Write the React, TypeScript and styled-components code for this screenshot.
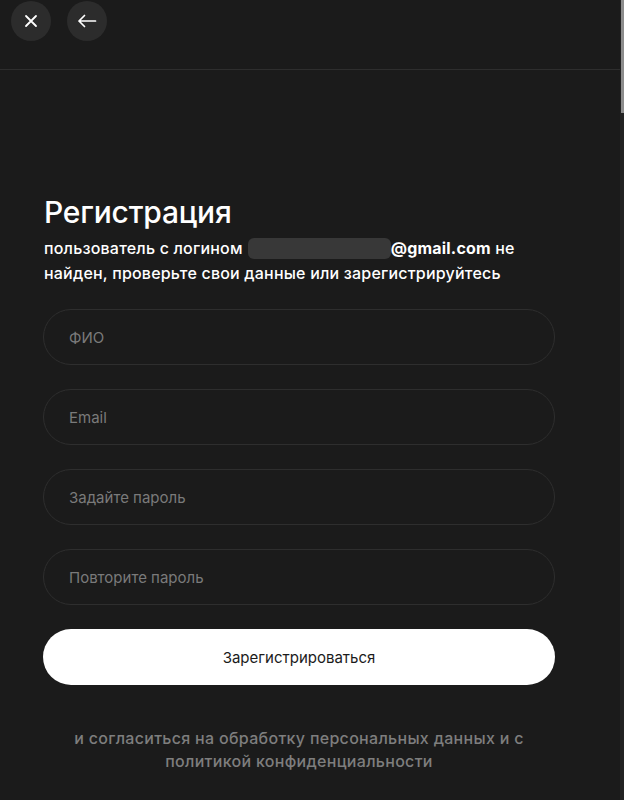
import React from "react";
import styled, { createGlobalStyle } from "styled-components";

const GlobalStyle = createGlobalStyle`
  html, body {
    margin: 0;
    padding: 0;
    background: #1b1b1b;
  }
  body {
    font-family: Inter, "Noto Sans", "Liberation Sans", sans-serif;
    color: #ffffff;
    -webkit-font-smoothing: antialiased;
  }
  * { box-sizing: border-box; }
`;

const Page = styled.div`
  width: 624px;
  min-height: 800px;
  background: #1b1b1b;
  display: flex;
  flex-direction: column;
`;

const Header = styled.header`
  height: 70px;
  width: 620px;
  display: flex;
  align-items: flex-start;
  gap: 16px;
  padding: 1px 0 0 11px;
  border-bottom: 1px solid #2e2e2e;
`;

const IconButton = styled.button`
  width: 40px;
  height: 40px;
  border-radius: 50%;
  border: none;
  background: #2c2c2c;
  color: #ffffff;
  display: flex;
  align-items: center;
  justify-content: center;
  padding: 0;
  cursor: pointer;
`;

const Content = styled.main`
  display: flex;
  flex-direction: column;
  width: 512px;
  margin-left: 43px;
  padding-top: 124px;
`;

const Title = styled.h1`
  margin: 0;
  font-size: 30px;
  font-weight: 500;
  line-height: 36px;
  letter-spacing: -0.2px;
  padding-left: 1px;
`;

const Message = styled.p`
  margin: 6px 0 0;
  font-size: 16px;
  font-weight: 500;
  line-height: 25px;
  letter-spacing: 0.2px;
  padding-left: 1px;
`;

const Redacted = styled.span`
  display: inline-block;
  width: 143px;
  height: 21px;
  border-radius: 6px;
  background: #383838;
  vertical-align: -5px;
  margin-left: 5px;
`;

const Strong = styled.b`
  font-weight: 700;
`;

const Form = styled.form`
  display: flex;
  flex-direction: column;
  gap: 24px;
  margin-top: 23px;
`;

const Field = styled.input`
  width: 512px;
  height: 56px;
  border-radius: 28px;
  border: 1px solid #2e2e2e;
  background: #1b1b1b;
  padding: 0 25px;
  font-family: inherit;
  font-size: 15px;
  color: #ffffff;
  outline: none;
  &::placeholder {
    color: #7a7a7a;
  }
`;

const Submit = styled.button`
  width: 512px;
  height: 56px;
  border-radius: 28px;
  border: none;
  background: #ffffff;
  color: #1b1b1b;
  font-family: inherit;
  font-size: 15px;
  font-weight: 400;
  cursor: pointer;
`;

const Consent = styled.p`
  margin: 42px 0 0;
  text-align: center;
  color: #7e7e7e;
  font-size: 16px;
  font-weight: 500;
  line-height: 23px;
  letter-spacing: 0.3px;
`;

const ScrollTrack = styled.div`
  position: fixed;
  top: 0;
  right: 0;
  width: 4px;
  height: 800px;
  background: #222222;
`;

const ScrollThumb = styled.div`
  width: 3px;
  margin-left: 1px;
  height: 113px;
  background: #8c8c8c;
`;

const CloseIcon = () => (
  <svg width="14" height="14" viewBox="0 0 14 14" fill="none">
    <path d="M2 2L12 12M12 2L2 12" stroke="#ffffff" strokeWidth="1.8" strokeLinecap="round" />
  </svg>
);

const BackIcon = () => (
  <svg width="20" height="14" viewBox="0 0 20 14" fill="none">
    <path d="M18.5 7H2M7.5 1.5L2 7L7.5 12.5" stroke="#ffffff" strokeWidth="1.7" strokeLinecap="round" strokeLinejoin="round" />
  </svg>
);

export default function App() {
  return (
    <Page>
      <GlobalStyle />
      <Header>
        <IconButton aria-label="Закрыть"><CloseIcon /></IconButton>
        <IconButton aria-label="Назад"><BackIcon /></IconButton>
      </Header>
      <Content>
        <Title>Регистрация</Title>
        <Message>
          пользователь с логином<Redacted /><Strong>@gmail.com</Strong> не найден, проверьте свои данные или зарегистрируйтесь
        </Message>
        <Form onSubmit={(e) => e.preventDefault()}>
          <Field placeholder="ФИО" />
          <Field placeholder="Email" />
          <Field type="password" placeholder="Задайте пароль" />
          <Field type="password" placeholder="Повторите пароль" />
          <Submit type="submit">Зарегистрироваться</Submit>
        </Form>
        <Consent>
          и согласиться на обработку персональных данных и с политикой конфиденциальности
        </Consent>
      </Content>
      <ScrollTrack>
        <ScrollThumb />
      </ScrollTrack>
    </Page>
  );
}
